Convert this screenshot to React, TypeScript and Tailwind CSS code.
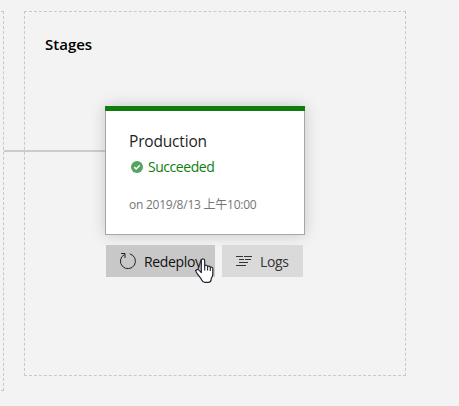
function Connector() {
  return <div className="mt-[138px] -ml-5 h-[2px] w-[101px] shrink-0 bg-[#cccccc]" />;
}

function SuccessIcon() {
  return (
    <svg className="h-3 w-3 shrink-0" viewBox="0 0 12 12" fill="none">
      <circle cx="6" cy="6" r="6" fill="#55a362" />
      <path d="M3.3 6.1 5.2 8 8.8 4.3" stroke="#fff" strokeWidth="1.5" />
    </svg>
  );
}

function RedeployIcon() {
  return (
    <svg className="h-4 w-4 shrink-0" viewBox="0 0 16 16" fill="none" stroke="#222" strokeWidth="1">
      <path d="M9.8.9A7.5 7.5 0 1 1 4.5 1.5" />
      <path d="M1 .5h4v4.5" />
    </svg>
  );
}

function LogsIcon() {
  return (
    <svg className="h-[10px] w-4 shrink-0" viewBox="0 0 16 10" fill="none" stroke="#333" strokeWidth="1">
      <path d="M0 .5h7M8 .5h8M3 3.5h5M9 3.5h6M3 6.5h9M0 9.5h10" />
    </svg>
  );
}

function HandCursor() {
  return (
    <svg className="absolute top-[13px] left-[89px] h-[25px] w-[19px]" viewBox="0 0 19 25">
      <path
        d="M6.3 14.5V2.8C6.3.2 9.7.2 9.7 2.8v5.1c.3-1 2.7-.9 2.9.6.5-.8 2.6-.5 2.7.9.7-.7 2.5-.2 2.5 1.3v5.6c0 2.2-1.7 3.4-1.7 5.2 0 1.7-1.3 2.8-3 2.8H9.9c-1.7 0-2.6-1.1-3.2-2.4-.8-1.7-2.2-3.2-3.6-5.1-1-1.4-2.2-2.6-2.2-3.7 0-1.5 1.9-2.1 3.1-1 .9.7 1.4 1.4 2.3 2.4Z"
        fill="#fff"
        stroke="#20202f"
        strokeWidth="1.2"
        strokeLinejoin="round"
      />
      <path d="M9.7 7.5v5M12.6 8.5v4M15.3 9.5v3.5" stroke="#20202f" strokeWidth="1.1" />
    </svg>
  );
}

function StageCard() {
  return (
    <div className="h-[129px] w-[200px] border border-t-0 border-[#a6a6a6] bg-white shadow-[0_0_14px_rgba(0,0,0,0.18)]">
      <div className="-mx-px h-[5px] bg-[#107c10]" />
      <div className="px-[23px] pt-[19px]">
        <div className="h-[22px] text-[15.5px] leading-[22px] tracking-[-0.18px] text-[#1f1f1f]">Production</div>
        <div className="mt-[5px] flex h-5 items-center gap-[5px] pl-[2px] text-[14px] leading-5 tracking-[-0.45px] text-[#107c10]">
          <SuccessIcon />
          <span>Succeeded</span>
        </div>
        <div className="mt-5 h-4 whitespace-nowrap text-[12px] leading-4 tracking-[-0.24px] text-[#757575]">
          on 2019/8/13 上午10:00
        </div>
      </div>
    </div>
  );
}

export default function App() {
  return (
    <main className="flex h-[406px] w-[459px] overflow-hidden bg-[#f3f3f3] pt-[11px] font-['Open_Sans','Noto_Sans_CJK_TC',sans-serif]">
      <div className="h-[380px] w-1 shrink-0 overflow-hidden">
        <div className="-ml-[296px] h-full w-[300px] border border-dashed border-[#c8c8c8]" />
      </div>
      <section className="ml-5 h-[365px] w-[382px] shrink-0 border border-dashed border-[#c8c8c8]">
        <h2 className="ml-5 mt-[21px] h-[22px] text-[15px] leading-[22px] font-semibold tracking-[0px] text-black">Stages</h2>
        <div className="-mt-[43px] -ml-px flex">
          <Connector />
          <div className="mt-[94px]">
            <StageCard />
            <div className="mt-[10px] ml-px flex gap-[7px] text-[14px] leading-8">
              <button className="relative flex h-8 w-[109px] items-center gap-2 bg-[#c8c8c8] pl-[14px] tracking-[-0.35px] text-[#111]">
                <RedeployIcon />
                <span className="pt-px">Redeploy</span>
                <HandCursor />
              </button>
              <button className="flex h-8 w-[81px] items-center gap-2 bg-[#dadada] pl-[14px] tracking-[-0.35px] text-[#333]">
                <LogsIcon />
                <span className="pt-px">Logs</span>
              </button>
            </div>
          </div>
        </div>
      </section>
    </main>
  );
}
